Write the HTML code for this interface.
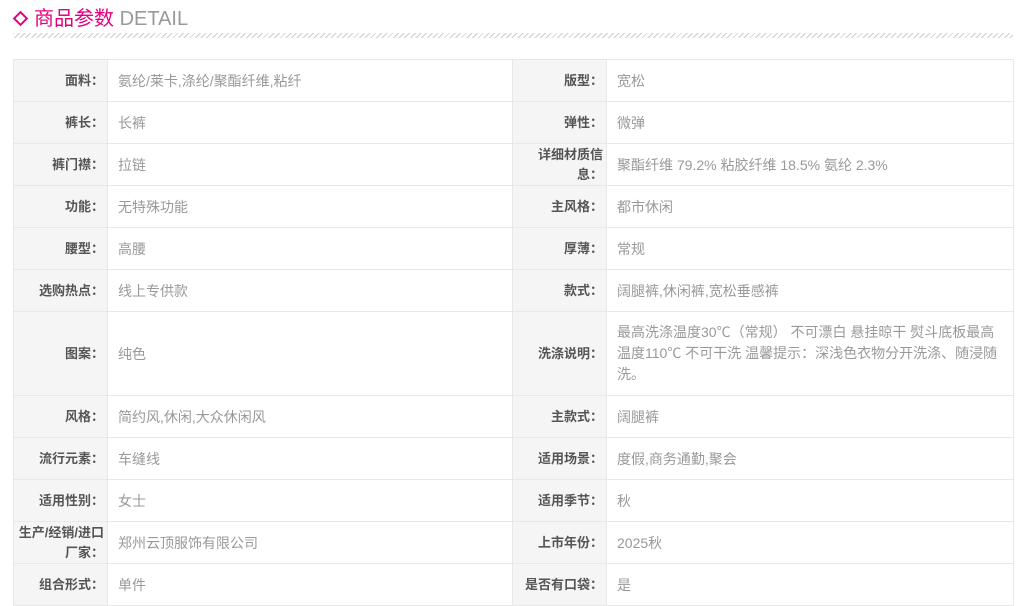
<!DOCTYPE html>
<html><head><meta charset="utf-8"><style>
body{margin:0;background:#fff;font-family:"Liberation Sans","Noto Sans CJK SC",sans-serif;}
.t{position:absolute;left:13px;top:5px;font-size:20px;color:#e4007f;line-height:28px;}
.t .d{display:inline-block;width:7px;height:7px;border:2px solid #e4007f;transform:rotate(45deg);margin:0 8px 3px 2px;vertical-align:middle}
.t span.e{color:#999}
.dl{position:absolute;left:13px;top:33px;width:1000px;height:5px;background:repeating-linear-gradient(135deg,#ccc 0 1px,transparent 1px 4px);}
table{position:absolute;left:13px;top:59px;border-collapse:collapse;table-layout:fixed;width:1000px;font-size:14px}
td{border:1px solid #e8e8e8;height:41px;padding:0 10px;line-height:20px;overflow:hidden}
td.l{background:#f5f5f5;color:#555;font-weight:bold;text-align:right;padding:0 3px 0 0;font-size:13px}
td.v{color:#999;}
td.w{padding-right:14px}
</style></head><body>
<div class="t"><span class="d"></span>商品参数 <span class="e">DETAIL</span></div>
<div class="dl"></div>
<table>
<colgroup><col style="width:94px"><col style="width:405px"><col style="width:94px"><col style="width:407px"></colgroup>
<tr><td class="l">面料：</td><td class="v">氨纶/莱卡,涤纶/聚酯纤维,粘纤</td><td class="l">版型：</td><td class="v">宽松</td></tr>
<tr><td class="l">裤长：</td><td class="v">长裤</td><td class="l">弹性：</td><td class="v">微弹</td></tr>
<tr><td class="l">裤门襟：</td><td class="v">拉链</td><td class="l">详细材质信息：</td><td class="v">聚酯纤维 79.2% 粘胶纤维 18.5% 氨纶 2.3%</td></tr>
<tr><td class="l">功能：</td><td class="v">无特殊功能</td><td class="l">主风格：</td><td class="v">都市休闲</td></tr>
<tr><td class="l">腰型：</td><td class="v">高腰</td><td class="l">厚薄：</td><td class="v">常规</td></tr>
<tr><td class="l">选购热点：</td><td class="v">线上专供款</td><td class="l">款式：</td><td class="v">阔腿裤,休闲裤,宽松垂感裤</td></tr>
<tr><td class="l" style="height:83px">图案：</td><td class="v">纯色</td><td class="l">洗涤说明：</td><td class="v w" style="line-height:21px">最高洗涤温度30℃（常规） 不可漂白 悬挂晾干 熨斗底板最高温度110℃ 不可干洗 温馨提示：深浅色衣物分开洗涤、随浸随洗。</td></tr>
<tr><td class="l">风格：</td><td class="v">简约风,休闲,大众休闲风</td><td class="l">主款式：</td><td class="v">阔腿裤</td></tr>
<tr><td class="l">流行元素：</td><td class="v">车缝线</td><td class="l">适用场景：</td><td class="v">度假,商务通勤,聚会</td></tr>
<tr><td class="l">适用性别：</td><td class="v">女士</td><td class="l">适用季节：</td><td class="v">秋</td></tr>
<tr><td class="l">生产/经销/进口厂家：</td><td class="v">郑州云顶服饰有限公司</td><td class="l">上市年份：</td><td class="v">2025秋</td></tr>
<tr><td class="l">组合形式：</td><td class="v">单件</td><td class="l">是否有口袋：</td><td class="v">是</td></tr>
</table>
</body></html>
